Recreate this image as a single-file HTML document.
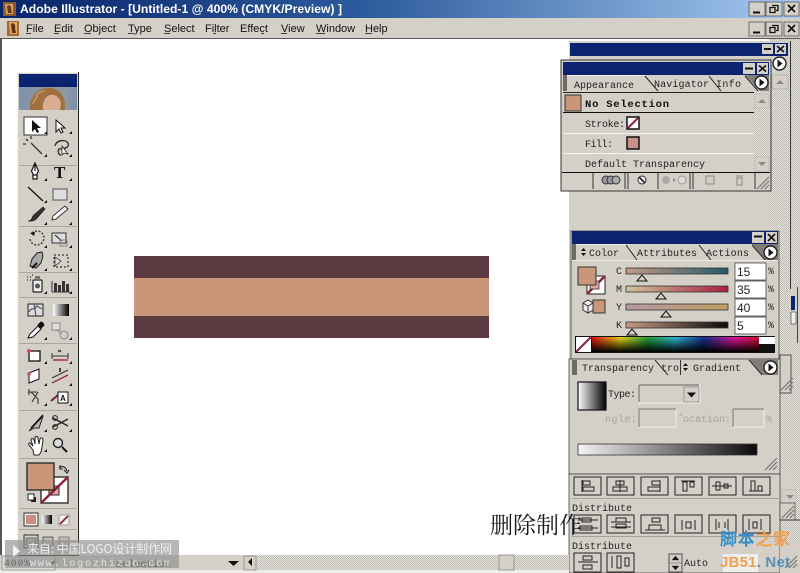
<!DOCTYPE html>
<html><head><meta charset="utf-8"><style>
html,body{margin:0;padding:0;background:#fff;width:800px;height:573px;overflow:hidden}
svg{display:block;filter:blur(.35px)}
.m{font:11px "Liberation Sans",sans-serif;fill:#111}
.p{font:10px "Liberation Mono",monospace;fill:#222}
.d{font:10px "Liberation Mono",monospace;fill:#a8a59e}
</style></head><body>
<svg width="800" height="573" viewBox="0 0 800 573" xmlns="http://www.w3.org/2000/svg">
<defs>
<linearGradient id="tb" x1="0" x2="1" y1="0" y2="0"><stop offset="0" stop-color="#0a246a"/><stop offset=".45" stop-color="#2c5a9c"/><stop offset="1" stop-color="#a6caf0"/></linearGradient>
<linearGradient id="wb" x1="0" x2="1" y1="0" y2="0"><stop offset="0" stop-color="#fff"/><stop offset="1" stop-color="#000"/></linearGradient>
<linearGradient id="bw" x1="0" x2="1" y1="0" y2="0"><stop offset="0" stop-color="#f4f4f4"/><stop offset="1" stop-color="#0a0a0a"/></linearGradient>
<linearGradient id="sc" x1="0" x2="1" y1="0" y2="0"><stop offset="0" stop-color="#c49a84"/><stop offset="1" stop-color="#235a68"/></linearGradient>
<linearGradient id="sm" x1="0" x2="1" y1="0" y2="0"><stop offset="0" stop-color="#ccc69a"/><stop offset="1" stop-color="#a81e42"/></linearGradient>
<linearGradient id="sy" x1="0" x2="1" y1="0" y2="0"><stop offset="0" stop-color="#b898a8"/><stop offset="1" stop-color="#c0a060"/></linearGradient>
<linearGradient id="sk" x1="0" x2="1" y1="0" y2="0"><stop offset="0" stop-color="#c49a84"/><stop offset="1" stop-color="#0a0a0a"/></linearGradient>
<linearGradient id="spec" x1="0" x2="1" y1="0" y2="0"><stop offset="0" stop-color="#e01010"/><stop offset=".17" stop-color="#e8d818"/><stop offset=".34" stop-color="#20a040"/><stop offset=".5" stop-color="#30b8d8"/><stop offset=".67" stop-color="#183090"/><stop offset=".85" stop-color="#e018a0"/><stop offset="1" stop-color="#d81030"/></linearGradient>
<linearGradient id="fade" x1="0" x2="0" y1="0" y2="1"><stop offset="0" stop-color="#000" stop-opacity="0"/><stop offset="1" stop-color="#000"/></linearGradient>
<linearGradient id="face" x1="0" x2="1" y1="0" y2="0"><stop offset="0" stop-color="#7d93ad"/><stop offset=".3" stop-color="#8a93a0"/><stop offset=".8" stop-color="#8f98a5"/><stop offset="1" stop-color="#7d90a8"/></linearGradient>
<pattern id="h" width="2" height="2" patternUnits="userSpaceOnUse"><rect width="2" height="2" fill="#e6e4df"/><rect width="1" height="1" fill="#bdbab2"/><rect x="1" y="1" width="1" height="1" fill="#bdbab2"/></pattern>
<g id="grip" stroke="#777" stroke-width="1.2" fill="none"><path d="M0 12 12 0M4 12 12 4M8 12 12 8"/></g>
<g id="arr"><circle cx="7.5" cy="7.5" r="6.5" fill="#fff" stroke="#222" stroke-width="1.4"/><path d="M5.5 3.500 10.500 7.500 5.500 11.500z" fill="#111"/></g>
<path id="t" d="M0 3 3 3 3 0z" fill="#111"/>
<path id="tri" d="M0 6 5 0 10 6z" fill="#d4d0c8" stroke="#111" stroke-width="1"/>
</defs>

<!-- window -->
<rect width="800" height="573" fill="#fff"/>
<rect width="800" height="18" fill="url(#tb)"/>
<rect x="3" y="2" width="13" height="14" fill="#8a5a30"/><path d="M5 4h8v10H6z" fill="#d8a060"/><path d="M7 6c2-2 5 0 4 3l1 4H8z" fill="#6a3a18"/>
<text x="20" y="13" textLength="322" lengthAdjust="spacingAndGlyphs" style="font:bold 12px 'Liberation Sans',sans-serif" fill="#fff">Adobe Illustrator - [Untitled-1 @ 400% (CMYK/Preview) ]</text>
<rect y="18" width="800" height="21" fill="#d4d0c8"/>
<rect x="7" y="21" width="12" height="15" fill="#a56a30"/><path d="M9 22h8v12H10z" fill="#e0a868"/><path d="M11 24c2-2 5 0 4 4l1 5h-4z" fill="#5e3214"/>
<g class="m">
<text x="26" y="32">File</text><text x="54" y="32">Edit</text><text x="84" y="32">Object</text><text x="128" y="32">Type</text><text x="164" y="32">Select</text><text x="205" y="32">Filter</text><text x="240" y="32">Effect</text><text x="281" y="32">View</text><text x="316" y="32">Window</text><text x="365" y="32">Help</text>
</g>
<path d="M26 33.500h5M54 33.500h5M84 33.500h7M128 33.500h6M164 33.500h6M213 33.500h3M261 33.500h3M281 33.500h6M316 33.500h9M365 33.500h7" stroke="#111" stroke-width=".8"/>
<g stroke="#555" stroke-width=".8" fill="#d4d0c8">
<rect x="749" y="2" width="16" height="14"/><rect x="766" y="2" width="16" height="14"/><rect x="784" y="2" width="15" height="14"/>
<rect x="749" y="22" width="16" height="14"/><rect x="766" y="22" width="16" height="14"/><rect x="784" y="22" width="15" height="14"/>
</g>
<path d="M753 12.500h7M753 32.500h7" stroke="#111" stroke-width="2"/>
<path d="M772 5.500h6v5h-2M770 7.500h5v5h-5zM772 25.500h6v5h-2M770 27.500h5v5h-5z" fill="none" stroke="#111" stroke-width="1.300"/>
<path d="M788 5l7 7M795 5l-7 7M788 25l7 7M795 25l-7 7" stroke="#111" stroke-width="1.700"/>
<rect y="38" width="800" height="1" fill="#555"/><rect x="0" y="39" width="2" height="516" fill="#555"/>

<!-- artwork -->
<rect x="134" y="256" width="355" height="82" fill="#5c3a42"/>
<rect x="134" y="278" width="355" height="38" fill="#c9967a"/>

<!-- right hatch -->
<rect x="769" y="39" width="31" height="534" fill="url(#h)"/>

<!-- back panel -->
<rect x="569" y="41" width="222" height="190" fill="#d4d0c8"/>
<rect x="569" y="231" width="2" height="130" fill="#d4d0c8"/>
<rect x="771" y="60" width="19" height="171" fill="url(#h)"/>
<rect x="790" y="41" width="1" height="248" fill="#333"/>
<rect x="570" y="43" width="218" height="13" fill="#0c2470"/>
<rect x="762" y="44" width="11" height="10" fill="#d4d0c8"/><path d="M764 49h7" stroke="#111" stroke-width="2"/>
<rect x="775" y="44" width="11" height="10" fill="#d4d0c8"/><path d="M777 46l7 6M784 46l-7 6" stroke="#111" stroke-width="1.600"/>
<use href="#arr" x="772" y="56"/>
<rect x="772" y="75" width="16" height="14" fill="#d4d0c8" stroke="#999" stroke-width=".5"/><path d="M776 84l4-4 4 4z" fill="#888"/>

<!-- appearance panel -->
<rect x="561" y="60" width="210" height="131" fill="#d4d0c8" stroke="#333" stroke-width="1"/>
<rect x="563" y="62" width="206" height="13" fill="#0c2470"/>
<rect x="743" y="63" width="12" height="11" fill="#d4d0c8"/><path d="M745 68.500h8" stroke="#111" stroke-width="2"/>
<rect x="757" y="63" width="11" height="11" fill="#d4d0c8"/><path d="M759 65.500l7 6M766 65.500l-7 6" stroke="#111" stroke-width="1.600"/>
<rect x="563" y="75" width="4" height="16" fill="#6e6b65"/>
<path d="M745 75h24v16h-9z" fill="#807d76"/>
<path d="M645 76l13 15M709 76l12 15M745 76l13 15" stroke="#222" fill="none"/>
<path d="M567 75.500h78" stroke="#f2f0ec"/>
<text class="p" x="574" y="88" textLength="60">Appearance</text>
<text class="p" x="654" y="87" textLength="55">Navigator</text>
<text class="p" x="716" y="87" textLength="25">Info</text>
<use href="#arr" x="754" y="75"/>
<path d="M563 92.500h206" stroke="#222"/>
<rect x="565" y="95" width="16" height="16" fill="#c9967a" stroke="#333"/>
<text x="585" y="107" textLength="84" style="font:bold 10.500px 'Liberation Mono',monospace" fill="#111">No Selection</text>
<path d="M563 112.500h191" stroke="#111"/>
<text class="p" x="585" y="127" textLength="40">Stroke:</text>
<rect x="627" y="117" width="12" height="12" fill="#fff" stroke="#111" stroke-width="1.500"/><path d="M628 128 638 118" stroke="#8a2040" stroke-width="2"/>
<path d="M563 133.500h191" stroke="#f4f2ee"/>
<text class="p" x="585" y="147" textLength="28">Fill:</text>
<rect x="627" y="137" width="12" height="12" fill="#c79088" stroke="#111" stroke-width="1.500"/>
<path d="M563 153.500h191" stroke="#f4f2ee"/>
<text class="p" x="585" y="167" textLength="120">Default Transparency</text>
<rect x="754" y="92" width="15" height="80" fill="url(#h)"/>
<rect x="755" y="94" width="14" height="14" fill="#d4d0c8" stroke="#aaa" stroke-width=".5"/><path d="M758 103l4-4 4 4z" fill="#888"/>
<rect x="755" y="157" width="14" height="14" fill="#d4d0c8" stroke="#aaa" stroke-width=".5"/><path d="M758 162l4 4 4-4z" fill="#888"/>
<path d="M562 172.500h208" stroke="#111"/>
<path d="M593 173v16M625 173v16M628 173v16M658 173v16M690 173v16M693 173v16M755 173v16" stroke="#333"/>
<circle cx="606" cy="180" r="4" fill="#999" stroke="#333"/><circle cx="611" cy="180" r="4" fill="#999" stroke="#333"/><circle cx="616" cy="180" r="4" fill="#aaa" stroke="#333"/>
<circle cx="642" cy="180" r="4" fill="#eee" stroke="#333"/><path d="M639 177l6 6" stroke="#111" stroke-width="1.500"/>
<circle cx="666" cy="180" r="4" fill="#aaa"/><circle cx="682" cy="180" r="4" fill="#ddd" stroke="#999"/><path d="M673 178l3 2-3 2z" fill="#888"/>
<rect x="706" y="176" width="8" height="8" fill="none" stroke="#888"/>
<path d="M736 176h7M737 178h5v7h-5z" fill="none" stroke="#888"/>
<use href="#grip" x="757" y="177"/>

<!-- color panel -->
<rect x="571" y="231" width="208" height="128" fill="#d4d0c8" stroke="#444" stroke-width=".8"/>
<rect x="572" y="231" width="206" height="13" fill="#0c2470"/>
<rect x="752" y="232" width="12" height="11" fill="#d4d0c8"/><path d="M754 236.500h8" stroke="#111" stroke-width="2"/>
<rect x="766" y="232" width="11" height="11" fill="#d4d0c8"/><path d="M768 234l7 7M775 234l-7 7" stroke="#111" stroke-width="1.600"/>
<rect x="572" y="244" width="4" height="16" fill="#6e6b65"/>
<path d="M752 244h26v16h-13z" fill="#807d76"/>
<path d="M626 245l11 15M699 245l12 15M752 245l13 15" stroke="#222" fill="none"/>
<path d="M576 244.500h50" stroke="#f2f0ec"/>
<path d="M581 251l2.500-3 2.500 3zM581 253l2.500 3 2.500-3z" fill="#111"/>
<text class="p" x="589" y="256" textLength="30">Color</text>
<text class="p" x="637" y="256" textLength="60">Attributes</text>
<text class="p" x="706" y="256" textLength="43">Actions</text>
<use href="#arr" x="763" y="245"/>
<path d="M572 260.500h206" stroke="#f0eee9"/>
<rect x="587" y="276" width="18" height="18" fill="#fff" stroke="#222"/><path d="M587 294 605 276" stroke="#8a2040" stroke-width="2.500"/><rect x="590" y="281" width="9" height="8" fill="#dfa5a0" stroke="#222" stroke-width=".7"/>
<rect x="578" y="267" width="18" height="18" fill="#c9967a" stroke="#333"/>
<path d="M583 303l5-3 5 3v7l-5 3-5-3z" fill="#eee" stroke="#333"/><path d="M583 303l5 3 5-3M588 306v7" fill="none" stroke="#333"/>
<rect x="593" y="300" width="12" height="13" fill="#c9967a" stroke="#333"/>
<g class="p"><text x="616" y="274">C</text><text x="616" y="292">M</text><text x="616" y="310">Y</text><text x="616" y="328">K</text></g>
<rect x="626" y="268" width="102" height="6" fill="url(#sc)" stroke="#333" stroke-width=".8"/>
<rect x="626" y="286" width="102" height="6" fill="url(#sm)" stroke="#333" stroke-width=".8"/>
<rect x="626" y="304" width="102" height="6" fill="url(#sy)" stroke="#333" stroke-width=".8"/>
<rect x="626" y="322" width="102" height="6" fill="url(#sk)" stroke="#333" stroke-width=".8"/>
<use href="#tri" x="637" y="275"/><use href="#tri" x="656" y="293"/><use href="#tri" x="661" y="311"/><use href="#tri" x="627" y="329"/>
<g fill="#fff" stroke="#444" stroke-width=".8"><rect x="735" y="263" width="31" height="17"/><rect x="735" y="281" width="31" height="17"/><rect x="735" y="299" width="31" height="17"/><rect x="735" y="317" width="31" height="17"/></g>
<g style="font:12px 'Liberation Sans',sans-serif" fill="#222"><text x="737" y="276">15</text><text x="737" y="294">35</text><text x="737" y="312">40</text><text x="737" y="330">5</text></g>
<g class="p"><text x="768" y="274">%</text><text x="768" y="292">%</text><text x="768" y="310">%</text><text x="768" y="328">%</text></g>
<rect x="575" y="336" width="200" height="17" fill="#111"/>
<rect x="576" y="337" width="15" height="15" fill="#fff"/><path d="M576 352 591 337" stroke="#8a2040" stroke-width="2"/>
<rect x="592" y="337" width="167" height="15" fill="url(#spec)"/><rect x="592" y="337" width="167" height="15" fill="url(#fade)"/>
<rect x="759" y="337" width="16" height="7" fill="#fff"/>

<!-- side scroll strip -->
<rect x="791" y="287" width="6" height="56" fill="#d4d0c8"/><path d="M797.500 287v56" stroke="#444"/>
<rect x="791" y="296" width="4" height="14" fill="#0c2470"/><rect x="791" y="312" width="5" height="12" fill="#eee" stroke="#333" stroke-width=".6"/>
<rect x="780" y="355" width="11" height="38" fill="#d4d0c8" stroke="#333" stroke-width=".8"/>
<use href="#grip" x="781" y="378"/>

<!-- gradient panel -->
<rect x="569" y="359" width="211" height="115" fill="#d4d0c8" stroke="#444" stroke-width=".8"/>
<rect x="572" y="360" width="5" height="15" fill="#6e6b65"/>
<path d="M749 359h29v16h-16z" fill="#807d76"/>
<path d="M655 360l13 15M680.500 360v15M749 360l13 15" stroke="#333" fill="none"/>
<text class="p" x="582" y="371" textLength="72">Transparency</text>
<text class="p" x="661" y="371" textLength="18">tro</text>
<path d="M683 366l2.500-3 2.500 3zM683 368l2.500 3 2.500-3z" fill="#111"/>
<text class="p" x="693" y="371" textLength="48">Gradient</text>
<use href="#arr" x="763" y="360"/>
<rect x="578" y="382" width="28" height="28" fill="url(#wb)" stroke="#111" stroke-width="1.200"/>
<text class="p" x="608" y="397" textLength="28">Type:</text>
<rect x="639" y="385" width="61" height="18" fill="#d4d0c8" stroke="#f2f0ec"/><path d="M639 385h60M639 385v17" stroke="#666" fill="none"/>
<rect x="684" y="387" width="15" height="15" fill="#d4d0c8" stroke="#777" stroke-width=".6"/><path d="M687 392.500h9l-4.500 5z" fill="#111"/>
<text class="d" x="605" y="422" textLength="32">ngle:</text>
<rect x="639" y="409" width="37" height="18" fill="#d4d0c8" stroke="#f2f0ec"/><path d="M639 409h37M639 409v18" stroke="#777" fill="none"/>
<text class="d" x="678" y="420">°</text>
<text class="d" x="683" y="422" textLength="48">ocation:</text>
<rect x="733" y="409" width="31" height="18" fill="#d4d0c8" stroke="#f2f0ec"/><path d="M733 409h31M733 409v18" stroke="#777" fill="none"/>
<text class="d" x="766" y="422">%</text>
<rect x="578" y="444" width="179" height="11" fill="url(#bw)" stroke="#333" stroke-width=".8"/>
<use href="#grip" x="765" y="458"/>

<!-- align panel -->
<rect x="569" y="474" width="211" height="99" fill="#d4d0c8" stroke="#444" stroke-width=".8"/>
<path d="M572 498.500h208M572 536.500h208" stroke="#a5a29b"/>
<g fill="#d4d0c8" stroke="#222" stroke-width="1">
<rect x="574" y="477" width="27" height="18"/><rect x="607" y="477" width="27" height="18"/><rect x="641" y="477" width="27" height="18"/><rect x="675" y="477" width="27" height="18"/><rect x="709" y="477" width="27" height="18"/><rect x="743" y="477" width="27" height="18"/>
<rect x="574" y="515" width="27" height="18"/><rect x="607" y="515" width="27" height="18"/><rect x="641" y="515" width="27" height="18"/><rect x="675" y="515" width="27" height="18"/><rect x="709" y="515" width="27" height="18"/><rect x="743" y="515" width="27" height="18"/>
<rect x="574" y="553" width="27" height="19"/><rect x="607" y="553" width="27" height="19"/>
</g>
<g fill="none" stroke="#222" stroke-width="1">
<path d="M582 480v12M583 481h7v4h-7zM583 487h11v4h-11z"/>
<path d="M620 480v12M616 481h8v4h-8zM613 487h14v4h-14z"/>
<path d="M660 480v12M652 481h8v4h-8zM648 487h12v4h-12z"/>
<path d="M681 481h14M683 482h4v9h-4zM690 482h4v5h-4z"/>
<path d="M712 486h20M716 482h4v8h-4zM724 484h4v4h-4z"/>
<path d="M749 491h14M751 481h4v10h-4zM758 486h4v5h-4z"/>
<path d="M578 520h20M578 528h20M582 518h9v4h-9zM580 526h12v4h-12z"/>
<path d="M611 522h20M611 527h20M616 518h10v4h-10zM616 524h10v4h-10z"/>
<path d="M645 530h20M652 518h8v4h-8zM649 525h12v5h-12z"/>
<path d="M682 520v10M695 520v10M686 522h5v6h-5z"/>
<path d="M716 519v11M728 519v11M719 522v6M725 522v6"/>
<path d="M749 519v11M761 519v11M753 522h4v6h-4z"/>
<path d="M578 562h20M583 556h9v4h-9zM583 565h9v4h-9z"/>
<path d="M612 556v12M617 556h4v12h-4zM625 558h4v8h-4z"/>
</g>
<text class="p" x="572" y="511" textLength="60">Distribute</text>
<text class="p" x="572" y="549" textLength="60">Distribute</text>
<rect x="669" y="554" width="13" height="18" fill="#d4d0c8" stroke="#333" stroke-width=".8"/><path d="M669 563h13M672 560l3.500-4 3.500 4zM672 566l3.500 4 3.500-4z" fill="#111" stroke="#333" stroke-width=".4"/>
<text class="p" x="684" y="566" textLength="24">Auto</text>
<rect x="723" y="554" width="35" height="18" fill="#eee"/>
<rect x="781" y="474" width="14" height="16" fill="#d4d0c8"/>
<rect x="782" y="490" width="14" height="13" fill="#d4d0c8" stroke="#aaa" stroke-width=".5"/><path d="M786 495l4 4 4-4z" fill="#888"/>
<rect x="780" y="503" width="15" height="17" fill="#d4d0c8" stroke="#333" stroke-width=".6"/><use href="#grip" x="782" y="506"/>
<path d="M780 520h20" stroke="#333"/>
<rect x="780" y="541" width="20" height="32" fill="#d4d0c8"/>
<use href="#grip" x="785" y="556"/>

<!-- status bar -->
<rect x="0" y="555" width="258" height="15" fill="#d4d0c8"/>
<rect x="258" y="555" width="311" height="15" fill="url(#h)"/>
<rect x="0" y="570" width="569" height="3" fill="#eeece8"/>
<rect x="2" y="556" width="53" height="14" fill="#dedbd4" stroke="#777" stroke-width=".6"/>
<path d="M49 561.500h7l-3.500 3z" fill="#333"/>
<path d="M228 561h11l-5.500 5z" fill="#111"/>
<rect x="244" y="556" width="12" height="14" fill="#d4d0c8" stroke="#777" stroke-width=".6"/><path d="M252 558v8l-4-4z" fill="#111"/>
<rect x="499" y="555" width="15" height="15" fill="#d4d0c8" stroke="#888" stroke-width=".8"/>
<text class="p" x="116" y="567" textLength="55">Selection</text>
<text class="p" x="4" y="566" textLength="26">400%</text>

<!-- toolbox -->
<rect x="17" y="72" width="62" height="484" fill="#d4d0c8"/>
<path d="M78.500 72v484M17 555.500h62" stroke="#222"/><path d="M17.500 72v484M17 72.500h61" stroke="#f6f5f1"/>
<rect x="19" y="74" width="58" height="13" fill="#0c2470"/>
<rect x="19" y="87" width="58" height="23" fill="url(#face)"/>
<path d="M30 110c-1-6 1-10 3-13 3-6 9-9 16-9 8 0 13 5 15 11 1 4 1 8 1 11z" fill="#a0703e"/>
<path d="M43 110c-1-6 1-13 7-15 6-1 10 3 11 8l-1 7z" fill="#d9ad92"/>
<path d="M36 96c2-3 5-5 9-5M33 104c1-4 3-6 5-8" stroke="#d2a86c" fill="none"/>
<g stroke="#aaa79f"><path d="M19 165.500h58M19 226.500h58M19 272.500h58M19 297.500h58M19 343.500h58M19 410.500h58M19 458.500h58M19 508.500h58M19 529.500h58"/></g>
<rect x="24" y="117" width="23" height="18" fill="#fff" stroke="#333"/>
<path d="M32 120v12l3-3 2 4 2-1-2-4h4z" fill="#111"/>
<path d="M56 120v12l3-3 2 4 2-1-2-4h4z" fill="#fff" stroke="#111"/>
<path d="M31 143l11 11M28 141l-2-2M31 139v-3M26 144h-3" stroke="#333" stroke-width="1.300" fill="none"/>
<path d="M55 146c1-6 10-7 13-3 2 4-3 6-9 6-2 3 0 6 2 6" fill="none" stroke="#333" stroke-width="1.400"/><path d="M62 146l6 8-4-1-2 2z" fill="#fff" stroke="#111" stroke-width=".7"/>
<path d="M35 163l-3.500 8 2 4h3l2-4zM35 163v8M33 175h4v4h-4z" fill="#fff" stroke="#111" stroke-width="1.200"/>
<text x="54" y="178" style="font:bold 17px 'Liberation Serif',serif" fill="#111">T</text>
<path d="M28 187 43 201" stroke="#111" stroke-width="1.300"/>
<rect x="53" y="189" width="14" height="11" fill="#ddd" stroke="#555"/>
<path d="M28 221c5 0 3-5 7-7l8-7 2 2-7 8c-2 3-5 5-10 4z" fill="#333" stroke="#111" stroke-width=".6"/>
<path d="M52 220l1-4 12-10 3 3-12 10z" fill="#fff" stroke="#333"/>
<path d="M32 233a7 7 0 1 1-2 6" fill="none" stroke="#444" stroke-width="1.500" stroke-dasharray="2 1.500"/><path d="M30 233l5-1-1 4z" fill="#111"/>
<rect x="52" y="233" width="14" height="10" fill="#ddd" stroke="#333"/><path d="M55 235l7 6" stroke="#111"/><rect x="60" y="240" width="7" height="6" fill="none" stroke="#888"/>
<path d="M30 266l2-7 5-6 5-1 1 4-2 7-5 5z" fill="#aaa" stroke="#222"/><path d="M32 268l5-5" stroke="#111" stroke-width="2"/>
<rect x="54" y="255" width="14" height="12" fill="none" stroke="#111" stroke-dasharray="2 2"/><path d="M55 257l6 4-6 5z" fill="#ddd" stroke="#111" stroke-width=".6"/>
<rect x="33" y="280" width="9" height="12" rx="1" fill="#eee" stroke="#222" stroke-width="1.200"/><circle cx="37.500" cy="286" r="2.500" fill="#555"/><rect x="35" y="276" width="5" height="4" fill="#777"/>
<path d="M27 277h1M30 277h1M27 280h1M30 280h1M32 275h1" stroke="#444" stroke-width="1.500"/>
<path d="M52 292h18M52 292v-11" stroke="#333"/><rect x="54" y="283" width="3" height="9" fill="#333"/><rect x="58" y="285" width="3" height="7" fill="#333"/><rect x="62" y="281" width="3" height="11" fill="#333"/><rect x="66" y="284" width="3" height="8" fill="#333"/>
<rect x="28" y="304" width="15" height="12" fill="#ddd" stroke="#222"/><path d="M29 312c3-6 6-1 7-5s3 3 6 1M34 304l2 12" stroke="#444" fill="none"/>
<rect x="53" y="304" width="16" height="12" fill="url(#wb)"/>
<path d="M28 338l2-4 8-8 3 3-8 8z" fill="#fff" stroke="#111"/><path d="M38 325l3-3 2 1 1 2-3 3z" fill="#111" stroke="#111"/>
<rect x="52" y="323" width="8" height="7" fill="#ddd" stroke="#888"/><circle cx="64" cy="335" r="4" fill="#ccc" stroke="#888"/><path d="M57 330l4 3" stroke="#555" stroke-dasharray="1 1"/>
<rect x="29" y="351" width="11" height="10" fill="#fff" stroke="#111" stroke-width="1.300"/><circle cx="29" cy="351" r="2" fill="#c0506a"/>
<path d="M52 356h16M52 353v6M68 353v6" stroke="#333"/><path d="M53 360h15" stroke="#a03050" stroke-width="1.500"/><path d="M58 352l3-2M58 350l3 2" stroke="#333"/>
<path d="M29 373l10-4v10l-10 4z" fill="#fff" stroke="#111"/><circle cx="29" cy="374" r="1.800" fill="#c0506a"/>
<path d="M52 383l16-8M52 378l16-8" stroke="#333"/><path d="M54 382l14-7" stroke="#a03050" stroke-width="1.500"/><path d="M60 368v4" stroke="#111" stroke-width="1.500"/>
<path d="M28 392h9M29 389v6M31 392l7 7v5M38 392l-6 10" stroke="#333" stroke-width="1.100" fill="none"/>
<path d="M51 401l7-6" stroke="#7a1f35" stroke-width="2"/><rect x="58" y="392" width="10" height="11" fill="#fff" stroke="#111"/><text x="60" y="401" style="font:bold 8px 'Liberation Sans',sans-serif" fill="#111">A</text>
<path d="M29 431l14-15-4 12-5 0z" fill="#bbb" stroke="#222"/><path d="M31 428l12-13" stroke="#111" stroke-width="1.300"/>
<path d="M53 418l15 8M53 427l15-8" stroke="#222" stroke-width="1.300"/><circle cx="55" cy="418" r="2.400" fill="none" stroke="#222"/><circle cx="55" cy="427" r="2.400" fill="none" stroke="#222"/>
<path d="M33 450l-4-5c-1-2 1-3 2-1l2 2-2-6c0-2 2-2 3 0l1 4 0-6c0-2 3-2 3 0l1 6 1-5c1-2 3-1 3 1l-1 7-1 5-2 3h-5z" fill="#fff" stroke="#222" stroke-width="1"/>
<circle cx="58" cy="443" r="4.500" fill="#ddd" stroke="#222" stroke-width="1.400"/><path d="M62 447l5 5" stroke="#111" stroke-width="2"/>
<g><use href="#t" x="44" y="131"/><use href="#t" x="69" y="131"/><use href="#t" x="44" y="154"/><use href="#t" x="69" y="154"/><use href="#t" x="44" y="178"/><use href="#t" x="69" y="178"/><use href="#t" x="44" y="200"/><use href="#t" x="69" y="200"/><use href="#t" x="44" y="222"/><use href="#t" x="69" y="222"/><use href="#t" x="44" y="245"/><use href="#t" x="69" y="245"/><use href="#t" x="44" y="268"/><use href="#t" x="69" y="268"/><use href="#t" x="44" y="291"/><use href="#t" x="69" y="291"/><use href="#t" x="44" y="337"/><use href="#t" x="69" y="337"/><use href="#t" x="44" y="361"/><use href="#t" x="69" y="361"/><use href="#t" x="44" y="383"/><use href="#t" x="69" y="383"/><use href="#t" x="44" y="403"/><use href="#t" x="69" y="403"/><use href="#t" x="44" y="429"/><use href="#t" x="69" y="429"/><use href="#t" x="44" y="449"/></g>
<rect x="41" y="477" width="27" height="26" fill="#fff" stroke="#222" stroke-width="1.300"/>
<rect x="49" y="486" width="10" height="9" fill="#dfa5a0" stroke="#222"/>
<path d="M41 503 68 477" stroke="#8a2040" stroke-width="2.400"/>
<rect x="27" y="463" width="27" height="27" fill="#c9967a" stroke="#222" stroke-width="1.300"/>
<path d="M59 468c3-3 7-1 8 3M60 465v4h3M64 470l3 3 2-3" fill="none" stroke="#222" stroke-width="1.100"/>
<rect x="31" y="497" width="5" height="5" fill="#222"/><rect x="28" y="494" width="6" height="6" fill="#fff" stroke="#222"/>
<rect x="24" y="513" width="14" height="13" fill="#eee" stroke="#333"/><rect x="26" y="515" width="10" height="9" fill="#c99080"/>
<rect x="42" y="515" width="10" height="9" fill="url(#wb)"/>
<rect x="59" y="515" width="10" height="10" fill="#eee" stroke="#777" stroke-width=".6"/><path d="M60 524l8-8" stroke="#8a2040" stroke-width="1.800"/>
<rect x="24" y="535" width="14" height="13" fill="#d4d0c8" stroke="#333"/><rect x="26" y="538" width="10" height="7" fill="#aaa" stroke="#333" stroke-width=".6"/>
<rect x="43" y="537" width="10" height="10" fill="#c0bdb6" stroke="#333" stroke-width=".7"/>
<rect x="59" y="537" width="10" height="10" fill="#c0bdb6" stroke="#666" stroke-width=".7"/>

<!-- logo watermark -->
<rect x="5" y="540" width="174" height="28" fill="#8f8f8f" opacity=".65"/>
<path d="M13 545l7 6-7 6z" fill="#fff" opacity=".85"/>
<text x="27" y="553" textLength="145" style="font:12px 'Noto Sans CJK SC',sans-serif" fill="#eee">来自: 中国LOGO设计制作网</text>
<text x="30" y="566" textLength="140" style="font:10px 'Liberation Mono',monospace" fill="#e8e8e8" opacity=".9">www.logozhizuo.com</text>
<!-- overlay text -->
<text x="490" y="533" textLength="92" style="font:23px 'Noto Serif CJK SC','Noto Sans CJK SC',serif" fill="#1a1a1a">删除制作</text>
<text x="720" y="545" textLength="70" style="font:bold 17px 'Noto Sans CJK SC',sans-serif" fill="#3a8fc8">脚本<tspan fill="#f0a050">之家</tspan></text>
<text x="720" y="567" textLength="70" style="font:bold 15px 'Liberation Sans',sans-serif" fill="#f0a050">JB51<tspan fill="#5a8fb8">. Net</tspan></text>
</svg>
</body></html>
